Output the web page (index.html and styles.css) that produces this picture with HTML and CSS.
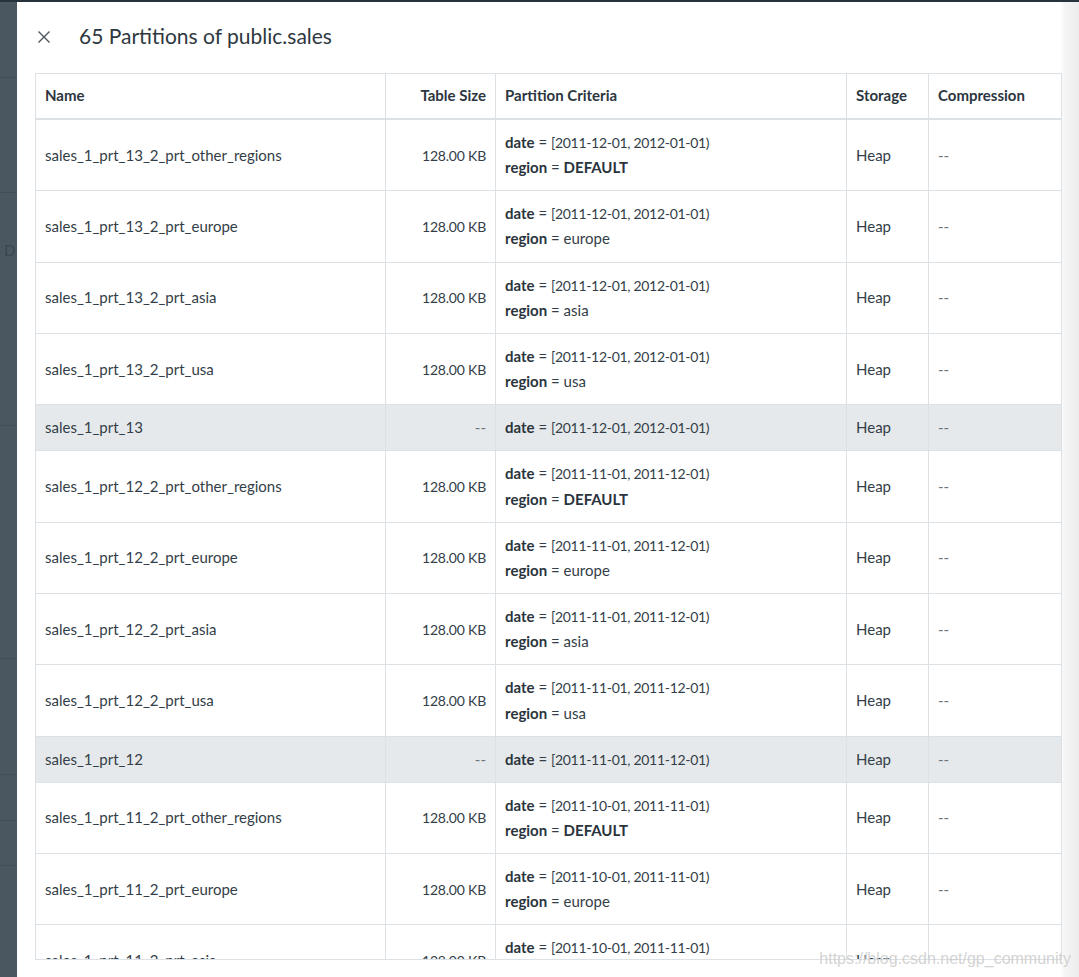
FILE: index.html
```html
<!DOCTYPE html>
<html lang="en">
<head>
<meta charset="utf-8">
<title>65 Partitions of public.sales</title>
<link rel="stylesheet" href="styles.css">
</head>
<body>
<div class="topbar"></div>
<div class="screen">
  <aside class="backdrop">
    <div class="bd-block b1"></div>
    <div class="bd-block b2"></div>
    <div class="bd-block b3"><span class="bd-letter">D</span></div>
    <div class="bd-block b4"></div>
    <div class="bd-block b5"></div>
    <div class="bd-block b6"></div>
    <div class="bd-block b7"></div>
  </aside>
  <main class="panel">
    <header class="panel-head">
      <button class="close" aria-label="Close">
        <svg width="14" height="14" viewBox="0 0 14 14"><path d="M1.5 1.5 L12.5 12.5 M12.5 1.5 L1.5 12.5" stroke="#4a5560" stroke-width="1.4" fill="none"/></svg>
      </button>
      <h1 class="title">65 Partitions of public.sales</h1>
    </header>
    <div class="table-wrap">
      <table class="parts">
        <thead>
          <tr>
            <th class="c-name">Name</th>
            <th class="c-size">Table Size</th>
            <th class="c-crit">Partition Criteria</th>
            <th class="c-store">Storage</th>
            <th class="c-comp">Compression</th>
          </tr>
        </thead>
        <tbody>
          <tr><td>sales_1_prt_13_2_prt_other_regions</td><td class="num">128.00 KB</td><td><b>date</b> = <span class="rng">[2011-12-01, 2012-01-01)</span><br><b>region</b> = <b>DEFAULT</b></td><td>Heap</td><td class="dash">--</td></tr>
          <tr><td>sales_1_prt_13_2_prt_europe</td><td class="num">128.00 KB</td><td><b>date</b> = <span class="rng">[2011-12-01, 2012-01-01)</span><br><b>region</b> = europe</td><td>Heap</td><td class="dash">--</td></tr>
          <tr><td>sales_1_prt_13_2_prt_asia</td><td class="num">128.00 KB</td><td><b>date</b> = <span class="rng">[2011-12-01, 2012-01-01)</span><br><b>region</b> = asia</td><td>Heap</td><td class="dash">--</td></tr>
          <tr><td>sales_1_prt_13_2_prt_usa</td><td class="num">128.00 KB</td><td><b>date</b> = <span class="rng">[2011-12-01, 2012-01-01)</span><br><b>region</b> = usa</td><td>Heap</td><td class="dash">--</td></tr>
          <tr class="parent"><td>sales_1_prt_13</td><td class="num dash">--</td><td><b>date</b> = <span class="rng">[2011-12-01, 2012-01-01)</span></td><td>Heap</td><td class="dash">--</td></tr>
          <tr><td>sales_1_prt_12_2_prt_other_regions</td><td class="num">128.00 KB</td><td><b>date</b> = <span class="rng">[2011-11-01, 2011-12-01)</span><br><b>region</b> = <b>DEFAULT</b></td><td>Heap</td><td class="dash">--</td></tr>
          <tr><td>sales_1_prt_12_2_prt_europe</td><td class="num">128.00 KB</td><td><b>date</b> = <span class="rng">[2011-11-01, 2011-12-01)</span><br><b>region</b> = europe</td><td>Heap</td><td class="dash">--</td></tr>
          <tr><td>sales_1_prt_12_2_prt_asia</td><td class="num">128.00 KB</td><td><b>date</b> = <span class="rng">[2011-11-01, 2011-12-01)</span><br><b>region</b> = asia</td><td>Heap</td><td class="dash">--</td></tr>
          <tr><td>sales_1_prt_12_2_prt_usa</td><td class="num">128.00 KB</td><td><b>date</b> = <span class="rng">[2011-11-01, 2011-12-01)</span><br><b>region</b> = usa</td><td>Heap</td><td class="dash">--</td></tr>
          <tr class="parent"><td>sales_1_prt_12</td><td class="num dash">--</td><td><b>date</b> = <span class="rng">[2011-11-01, 2011-12-01)</span></td><td>Heap</td><td class="dash">--</td></tr>
          <tr><td>sales_1_prt_11_2_prt_other_regions</td><td class="num">128.00 KB</td><td><b>date</b> = <span class="rng">[2011-10-01, 2011-11-01)</span><br><b>region</b> = <b>DEFAULT</b></td><td>Heap</td><td class="dash">--</td></tr>
          <tr><td>sales_1_prt_11_2_prt_europe</td><td class="num">128.00 KB</td><td><b>date</b> = <span class="rng">[2011-10-01, 2011-11-01)</span><br><b>region</b> = europe</td><td>Heap</td><td class="dash">--</td></tr>
          <tr><td>sales_1_prt_11_2_prt_asia</td><td class="num">128.00 KB</td><td><b>date</b> = <span class="rng">[2011-10-01, 2011-11-01)</span><br><b>region</b> = asia</td><td>Heap</td><td class="dash">--</td></tr>
        </tbody>
      </table>
    </div>
    <div class="watermark">https://blog.csdn.net/gp_community</div>
  </main>
</div>
</body>
</html>
```

FILE: styles.css
```css
html, body {
  margin: 0;
  padding: 0;
  height: 100%;
}
body {
  background: #4b5760;
  font-family: "Lato", "Liberation Sans", sans-serif;
  color: #333e48;
  overflow: hidden;
}
.topbar {
  height: 2px;
  background: #27333c;
}
.screen {
  display: flex;
  height: 975px;
}
.backdrop {
  width: 17px;
  flex: none;
  display: flex;
  flex-direction: column;
  background: #4b5760;
}
.bd-block {
  border-bottom: 1px solid #434f58;
  flex: none;
}
.b1 { height: 75px; }
.b2 { height: 114px; }
.b3 { height: 232px; position: relative; }
.b4 { height: 232px; }
.b5 { height: 115px; }
.b6 { height: 45px; }
.b7 { height: 44px; }
.bd-letter {
  position: absolute;
  left: 4px;
  top: 48px;
  font-size: 15px;
  color: #3a464f;
}
.panel {
  flex: 1;
  position: relative;
  background: linear-gradient(to right, #ffffff 0, #ffffff 1043px, #f6f6f6 1047px, #ececec 100%);
  padding: 0 0 0 18px;
  overflow: hidden;
}
.panel-head {
  display: flex;
  align-items: center;
  height: 69px;
  padding-bottom: 2px;
}
.close {
  border: 0;
  background: transparent;
  padding: 0;
  margin: 0 0 0 2px;
  width: 14px;
  height: 14px;
  display: flex;
}
.title {
  margin: 0 0 0 28px;
  padding-bottom: 3px;
  font-size: 21px;
  font-weight: 400;
  color: #2e3841;
}
.table-wrap {
  width: 1025px;
  height: 885px;
  border: 1px solid #dbe1e5;
  overflow: hidden;
  background: #fff;
}
.parts {
  width: 100%;
  border-collapse: collapse;
  font-size: 15px;
  table-layout: fixed;
}
.parts th, .parts td {
  border: 1px solid #dbe1e5;
  padding: 10px 9px;
  line-height: 25.15px;
  text-align: left;
  vertical-align: middle;
  white-space: nowrap;
}
.parts tr:first-child th { border-top: 0; }
.parts th:first-child, .parts td:first-child { border-left: 0; }
.parts th:last-child, .parts td:last-child { border-right: 0; }
.parts thead th {
  font-weight: 700;
  color: #2c3640;
  line-height: 25px;
  padding: 9px 9px 10px;
  border-bottom: 2px solid #dbe1e5;
}
.c-name { width: 331px; }
.c-size { width: 91px; }
.c-crit { width: 332px; }
.c-store { width: 63px; }
.c-comp { width: auto; }
.parts .c-size, .parts .num {
  text-align: right;
}
.parts .num:not(.dash) {
  font-size: 14px;
  letter-spacing: -0.2px;
}
.rng {
  font-size: 14px;
  letter-spacing: -0.3px;
}
.parts b {
  font-weight: 700;
  color: #2a343d;
}
.parts tr.parent td {
  background: #e6e9eb;
}
.dash {
  color: #6b757d;
}
.watermark {
  position: absolute;
  right: 8px;
  bottom: 9px;
  font-size: 16px;
  color: rgba(200, 200, 200, 0.8);
  font-family: "Liberation Sans", sans-serif;
}
```
